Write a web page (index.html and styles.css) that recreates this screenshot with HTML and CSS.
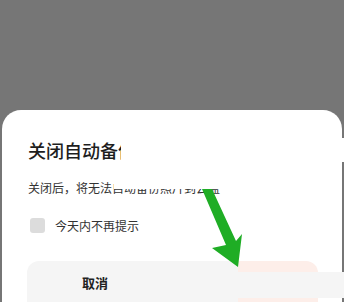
FILE: index.html
```html
<!DOCTYPE html>
<html lang="zh">
<head>
<meta charset="utf-8">
<link rel="stylesheet" href="styles.css">
</head>
<body>
<div class="page">
  <div class="sheet">
    <h1 class="title">关闭自动备份<span class="patch title-patch"></span></h1>
    <p class="desc">关闭后，将无法自动备份照片到云盘<span class="patch desc-patch"></span></p>
    <div class="check"><span class="box"></span><span class="check-text">今天内不再提示</span></div>
    <div class="actions">
      <div class="btn cancel">取消</div>
      <div class="btn confirm"></div>
    </div>
    <div class="band"></div>
  </div>
  <svg class="arrow" width="344" height="302" viewBox="0 0 344 302">
    <polygon points="202,189 212,189 236,241 242,234 238,267 212,248 226,245" fill="#1fad25"/>
  </svg>
</div>
</body>
</html>
```
FILE: styles.css
```css
html, body {
  margin: 0;
  padding: 0;
}
body {
  background: #767676;
  font-family: "Noto Sans CJK SC", "Noto Sans", sans-serif;
  color: #222;
  overflow: hidden;
}
.page {
  position: relative;
  width: 344px;
  height: 302px;
  overflow: hidden;
  padding-top: 110px;
  box-sizing: border-box;
}
.sheet {
  position: relative;
  margin: 0 2px;
  height: 220px;
  background: #fff;
  border-radius: 19px 19px 0 0;
  padding: 28px 0 0 26px;
  box-sizing: border-box;
}
.title {
  position: relative;
  margin: 0;
  font-size: 18px;
  line-height: 24px;
  font-weight: 500;
  color: #1e1e1e;
}
.desc {
  position: relative;
  margin: 17px 0 0;
  font-size: 12px;
  line-height: 18px;
  color: #333;
}
.patch {
  position: absolute;
  background: #fff;
}
.title-patch {
  left: 93px;
  top: 0;
  width: 230px;
  height: 24px;
}
.desc-patch {
  left: 86px;
  top: 0;
  width: 112px;
  height: 10px;
}
.check {
  display: flex;
  align-items: center;
  gap: 10px;
  margin-top: 21px;
  padding-left: 2px;
  height: 15px;
}
.box {
  width: 15px;
  height: 15px;
  border-radius: 3px;
  background: #dcdcdc;
}
.check-text {
  font-size: 12px;
  line-height: 15px;
  color: #333;
}
.actions {
  display: flex;
  margin-top: 28px;
  margin-left: -1px;
}
.btn {
  height: 44px;
  line-height: 44px;
  font-size: 13px;
  font-weight: 700;
}
.cancel {
  width: 156px;
  padding-left: 55px;
  background: #f5f5f5;
  border-radius: 12px 0 0 0;
  color: #222;
}
.confirm {
  width: 80px;
  background: #fdeee9;
  border-radius: 0 12px 0 0;
}
.band {
  position: absolute;
  left: 230px;
  top: 162px;
  width: 114px;
  height: 26px;
  background: #f5f5f5;
}
.arrow {
  position: absolute;
  left: 0;
  top: 0;
  pointer-events: none;
}
```
